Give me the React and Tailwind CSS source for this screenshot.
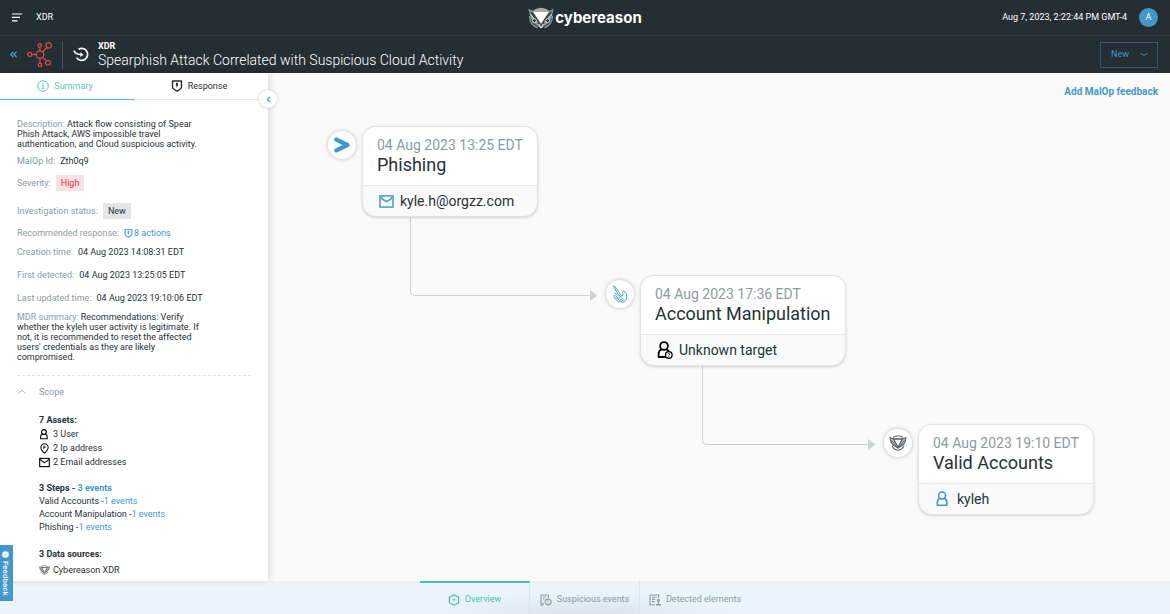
import { ChevronLeft, ChevronsLeft } from 'lucide-react';

const ASSETS = [
  { icon: 'user', label: '3 User' },
  { icon: 'pin', label: '2 Ip address' },
  { icon: 'mail', label: '2 Email addresses' }
];

const STEPS = [
  { name: 'Valid Accounts', events: '1 events' },
  { name: 'Account Manipulation', events: '1 events' },
  { name: 'Phishing', events: '1 events' }
];

const OwlIcon = ({ className }) => (
  <svg className={className} viewBox="0 0 26 22" fill="none" aria-hidden="true">
    <path d="M5 3.6 Q13 -2.2 21 3.6 L19 5 H7 Z" fill="#a4aaad" />
    <path d="M1.6 9 Q1.8 17.8 9.5 20.8 M24.4 9 Q24.2 17.8 16.5 20.8" stroke="#8b9295" strokeWidth="1.5" />
    <path d="M0.3 1.8 L5.5 4 H20.5 L25.7 1.8 L24.2 8 L21.5 15.5 L15.3 20 L13 21.6 L10.7 20 L4.5 15.5 L1.8 8 Z" fill="#8b9295" />
    <path d="M2 4.2 L6 5.4 L13 18 L20 5.4 L24 4.2 L22 8 L13 20.5 L4 8 Z" fill="#3b464b" />
    <path d="M4.8 4.8 H21.2 L13 16.2 Z" fill="#fff" />
    <path d="M2.4 7.6 L9.6 15.4 M23.6 7.6 L16.4 15.4" stroke="#e3e6e7" strokeWidth="1" />
    <circle cx="6.4" cy="13.6" r="1.9" fill="#242e33" stroke="#e3e6e7" strokeWidth="0.9" />
    <circle cx="19.6" cy="13.6" r="1.9" fill="#242e33" stroke="#e3e6e7" strokeWidth="0.9" />
    <path d="M10.8 17 L13 21 L15.2 17" stroke="#fff" strokeWidth="0.9" />
  </svg>
);

const OwlMark = ({ className }) => (
  <svg className={className} viewBox="0 0 18 16" fill="none" stroke="#5d6366" aria-hidden="true">
    <path d="M4 2.4 Q9 -0.8 14 2.4" strokeWidth="1.1" />
    <path d="M1 2.6 L4.5 4 H13.5 L17 2.6 Q16.8 7 14.5 9.5 L9 13.2 L3.5 9.5 Q1.2 7 1 2.6 Z" fill="#b9bdbf" strokeWidth="1.1" />
    <path d="M4.5 4 L9 12.4 L13.5 4 Z" fill="#fff" strokeWidth="1.3" />
    <path d="M2.6 5.6 L7.6 12 M15.4 5.6 L10.4 12" strokeWidth="0.9" />
    <path d="M3 11 Q5 14.8 9 15.2 Q13 14.8 15 11" strokeWidth="1.1" />
  </svg>
);

const ShieldIcon = ({ className }) => (
  <svg className={className} viewBox="0 0 12 12" fill="none" stroke="currentColor" aria-hidden="true">
    <path d="M1.5 1 H10.5 V7 Q10.5 8.8 6 11 Q1.5 8.8 1.5 7 Z" strokeWidth="1.4" strokeLinejoin="round" />
    <path d="M5 2.8 H7.2 L6.8 5 H7.4 L5.4 8 L5.6 5.8 H4.8 Z" fill="currentColor" stroke="none" />
  </svg>
);

const UserIcon = ({ className, unknown = false }) => (
  <svg className={className} viewBox="0 0 16 18" fill="none" stroke="currentColor" strokeWidth="1.8" aria-hidden="true">
    <circle cx="7" cy="5" r="3.9" />
    <path d="M4.6 8.2 Q1.6 9.6 1.6 13 V16 H12.4 V13 Q12.4 9.6 9.4 8.2" strokeLinejoin="round" />
    {unknown && (
      <g>
        <circle cx="11.8" cy="14" r="3.3" fill="#fafafa" strokeWidth="1.3" />
        <path d="M10.8 13.2 Q11 12.3 11.9 12.4 Q12.9 12.6 12.6 13.5 L11.8 14.2 V14.7 M11.8 15.3 V16" strokeWidth="0.8" />
      </g>
    )}
  </svg>
);

const PinIcon = ({ className }) => (
  <svg className={className} viewBox="0 0 12 13" fill="none" stroke="currentColor" aria-hidden="true">
    <path d="M6 12 Q1.7 8 1.7 5.2 A4.3 4.3 0 0 1 10.3 5.2 Q10.3 8 6 12 Z" strokeWidth="1.2" />
    <path d="M5 6.8 V4 H6.4 Q7.4 4.2 6.8 5.4 L5.2 5.6" strokeWidth="0.9" />
  </svg>
);

const MailIcon = ({ className }) => (
  <svg className={className} viewBox="0 0 16 14" fill="none" stroke="currentColor" strokeWidth="1.6" aria-hidden="true">
    <rect x="1" y="1" width="14" height="12" />
    <path d="M2 2 L3.5 4.4 L8 7.2 L12.5 4.4 L14 2" />
  </svg>
);

const MalopIcon = ({ className }) => (
  <svg className={className} viewBox="0 0 25 25" fill="none" stroke="#d04a4c" strokeWidth="1.3" aria-hidden="true">
    <circle cx="13" cy="12.6" r="3.8" />
    <circle cx="2.7" cy="12.4" r="2" />
    <circle cx="12.8" cy="3.4" r="1.7" />
    <circle cx="21.7" cy="3.4" r="2.7" />
    <circle cx="21" cy="20.8" r="2.4" />
    <circle cx="13" cy="23" r="1.7" />
    <path d="M4.7 12.5 H9.2 M12.9 5.1 V8.8 M15.7 10 L19.9 5.5 M15.8 15.3 L19.3 19 M13 16.4 V21.3" />
  </svg>
);

const ReopenIcon = ({ className }) => (
  <svg className={className} viewBox="0 0 16 16" fill="none" stroke="#fff" strokeWidth="1.7" aria-hidden="true">
    <path d="M5.6 2.2 A6 6 0 1 1 3.6 10.6" />
    <path d="M0.8 3.4 Q2.2 7.4 8.8 7.6" strokeWidth="1.5" />
    <path d="M7.4 5.2 L10.6 7.7 L7.2 10 Z" fill="#fff" stroke="none" />
  </svg>
);

const ArrowMark = ({ className }) => (
  <svg className={className} viewBox="0 0 16 16" aria-hidden="true">
    <path d="M2.4 2.6 L13.4 8 L2.4 13.4" fill="none" stroke="#4398cb" strokeWidth="4.4" strokeLinecap="round" strokeLinejoin="round" />
    <path d="M0 6.4 L5.6 8 L0 9.6 Z" fill="#fff" />
  </svg>
);

const HandIcon = ({ className }) => (
  <svg className={className} viewBox="0 0 16 18" fill="none" stroke="#4aa9cc" strokeWidth="1" aria-hidden="true">
    <path d="M1 0.6 L6.4 9.4 M2.4 0.8 L8.2 9" />
    <path d="M8.2 9 L10 11.4 Q11.4 10 10.8 7.4 Q10.8 6 12.2 6.2 Q14.8 8.4 14.9 12 Q14.4 16.8 10 17.2 Q6 17.4 3.4 14 L2 11.4" />
    <path d="M2 11.4 Q2 10.2 3.2 10.6 L6.4 13.4 M2.6 9.4 Q2.8 8 4 8.6 L7.4 11.6 M6.4 9.4 L9 12.2 M3.6 13.4 Q4 12.6 5 13.4 L7.6 15.4 M6.4 13.4 L8.6 12.2 M7.6 15.4 L11 13.4 M9 16.4 L12.4 14.4" />
  </svg>
);

const OverviewIcon = ({ className }) => (
  <svg className={className} viewBox="0 0 12 12" fill="none" stroke="currentColor" aria-hidden="true">
    <path d="M6 0.8 L10.6 3.3 V8.7 L6 11.2 L1.4 8.7 V3.3 Z" strokeWidth="1.3" strokeLinejoin="round" />
    <path d="M4.4 5 H7.6 L6 7.4 Z" fill="currentColor" stroke="none" />
  </svg>
);

const EventsIcon = ({ className }) => (
  <svg className={className} viewBox="0 0 12 12" fill="none" stroke="currentColor" aria-hidden="true">
    <path d="M4 9.8 H2.6 V11 H1 V1 H8.4 V4 M3 3 H6 M3 5 H4.6" strokeWidth="1.1" />
    <circle cx="8.1" cy="8.1" r="3" strokeWidth="1.1" />
    <path d="M8.1 6.3 V8.6 M8.1 9.2 V10" strokeWidth="0.9" />
  </svg>
);

const ElementsIcon = ({ className }) => (
  <svg className={className} viewBox="0 0 12 12" fill="none" stroke="currentColor" aria-hidden="true">
    <path d="M6 10.8 H1 V1 H9.6 V4 M3 3.2 H7.6 M3 5.4 H6 M3 7.6 H6" strokeWidth="1.1" />
    <circle cx="9.4" cy="6.2" r="1.3" fill="currentColor" strokeWidth="0.4" />
    <path d="M9.4 7 V10.4 M7 10.8 H11.8" strokeWidth="1.4" />
  </svg>
);

const ICONS = { user: UserIcon, pin: PinIcon, mail: MailIcon };

const TopBar = () => (
  <header className="flex h-9 items-center justify-between border-b border-[#313b40] bg-[#242e33] px-3 text-white">
    <div className="flex flex-1 items-center gap-3">
      <button type="button" aria-label="Menu">
        <svg className="h-[10px] w-3" viewBox="0 0 12 10" stroke="#fff" strokeWidth="1.2" aria-hidden="true">
          <path d="M0 1 H10 M0 4.4 H8 M0 7.8 H5.5" />
        </svg>
      </button>
      <span className="text-[9px]">XDR</span>
    </div>
    <div className="flex items-center gap-px font-[Inter,sans-serif]">
      <OwlIcon className="h-[22px] w-[26px]" />
      <span className="text-[15px] leading-5 font-bold">cybereason</span>
    </div>
    <div className="flex flex-1 items-center justify-end gap-3">
      <time className="text-[9px]">Aug 7, 2023, 2:22:44 PM GMT-4</time>
      <button type="button" className="size-[19px] rounded-full bg-[#4398cb] text-[9px]">A</button>
    </div>
  </header>
);

const TitleBar = () => (
  <div className="flex h-[37px] items-center bg-[#242e33] pr-3 pl-2 text-white">
    <button type="button" aria-label="Back" className="text-[#4398cb]">
      <ChevronsLeft size={11} strokeWidth={3} />
    </button>
    <MalopIcon className="ml-2 size-[25px]" />
    <div className="mr-[10px] ml-[10px] h-7 w-px bg-[#48535a]" />
    <ReopenIcon className="size-4" />
    <div className="ml-[9px] flex-1">
      <p className="text-[9px] leading-[11px] font-bold">XDR</p>
      <h1 className="text-[14px] leading-4 font-light">Spearphish Attack Correlated with Suspicious Cloud Activity</h1>
    </div>
    <div className="grid items-center">
      <select
        aria-label="Status"
        defaultValue="New"
        className="col-start-1 row-start-1 h-[26px] w-[58px] appearance-none border border-[#2d5b76] bg-transparent pl-[10px] text-[9px] text-[#4398cb]"
      >
        <option>New</option>
      </select>
      <svg className="pointer-events-none col-start-1 row-start-1 mr-[10px] h-[5px] w-2 justify-self-end" viewBox="0 0 8 5" fill="none" stroke="#4398cb" aria-hidden="true">
        <path d="M0.4 1 L4 3.6 L7.6 1" />
      </svg>
    </div>
  </div>
);

const Field = ({ label, children, className = '' }) => (
  <div className={`flex items-center ${className}`}>
    <dt className="text-[#8a9ba5]">{label}</dt>
    <dd className="ml-[5px]">{children}</dd>
  </div>
);

const Sidebar = () => (
  <aside className="relative z-10 w-[268px] shrink-0 bg-white text-[9px] leading-[10px] text-[#263238] shadow-[2px_0_6px_rgba(0,0,0,0.12)]">
    <nav className="grid h-[27px] grid-cols-2">
      <button type="button" className="flex items-center justify-center gap-[5px] border-b border-[#5cc4b8] pr-1 text-[#5cc4b8]">
        <svg className="size-3" viewBox="0 0 12 12" fill="none" stroke="currentColor" aria-hidden="true">
          <circle cx="6" cy="6" r="5.3" />
          <path d="M6 2.8 V4 M5 5.3 H6.1 V8.7 M4.8 8.7 H7.3" />
        </svg>
        Summary
      </button>
      <button type="button" className="flex items-center justify-center gap-[5px] border-b border-[#e8ebec] pr-1">
        <ShieldIcon className="size-3" />
        Response
      </button>
    </nav>
    <button
      type="button"
      aria-label="Collapse"
      className="absolute top-[17px] -right-[9px] flex size-[18px] items-center justify-center rounded-full bg-white text-[#4398cb] shadow-[0_0_3px_rgba(0,0,0,0.25)]"
    >
      <ChevronLeft size={9} strokeWidth={3} />
    </button>

    <div className="px-[17px] pt-[19px] pb-1">
      <dl>
        <div className="w-[184px]">
          <dt className="inline text-[#8a9ba5]">Description: </dt>
          <dd className="inline">
            Attack flow consisting of Spear Phish Attack, AWS impossible travel authentication, and Cloud suspicious activity.
          </dd>
        </div>
        <Field label="MalOp Id:" className="mt-[7px]">Zth0q9</Field>
        <Field label="Severity:" className="mt-[9px]">
          <span className="flex h-4 items-center bg-[#f9e1e4] px-[5px] text-[#d9343f]">High</span>
        </Field>
        <Field label="Investigation status:" className="mt-3">
          <span className="flex h-4 items-center bg-[#e4e5e6] px-[5px]">New</span>
        </Field>
        <Field label="Recommended response:" className="mt-[9px]">
          <a href="#actions" className="flex items-center gap-px text-[#4398cb]">
            <ShieldIcon className="size-[9px]" />
            8 actions
          </a>
        </Field>
        <Field label="Creation time:" className="mt-[9px]">04 Aug 2023 14:08:31 EDT</Field>
        <Field label="First detected:" className="mt-[13px]">04 Aug 2023 13:25:05 EDT</Field>
        <Field label="Last updated time:" className="mt-[13px]">04 Aug 2023 19:10:06 EDT</Field>
        <div className="mt-[9px] w-[184px]">
          <dt className="inline text-[#8a9ba5]">MDR summary: </dt>
          <dd className="inline">
            Recommendations: Verify whether the kyleh user activity is legitimate. If not, it is recommended to reset the affected users' credentials as they are likely compromised.
          </dd>
        </div>
      </dl>

      <section className="mt-[13px] border-t border-dashed border-[#dfe3e5] pt-[11px]">
        <button type="button" className="flex items-center gap-3 text-[#8a9ba5]">
          <svg className="h-[6px] w-[10px]" viewBox="0 0 10 6" fill="none" stroke="#8fc4e0" aria-hidden="true">
            <path d="M1 4.6 L5 1 L9 4.6" />
          </svg>
          Scope
        </button>
        <div className="pt-[16px] pl-[22px] leading-[14px]">
          <h2 className="font-bold">7 Assets:</h2>
          <ul>
            {ASSETS.map(({ icon, label }) => {
              const Icon = ICONS[icon];
              return (
                <li key={label} className="flex items-center gap-[3px]">
                  <Icon className="h-[11px] w-[11px] text-black" />
                  {label}
                </li>
              );
            })}
          </ul>
          <h2 className="mt-[13px] leading-[13px] font-bold">
            3 Steps - <a href="#events" className="text-[#4398cb]">3 events</a>
          </h2>
          <ul className="leading-[13px]">
            {STEPS.map(step => (
              <li key={step.name}>
                {step.name} -<a href="#events" className="text-[#4398cb]">{step.events}</a>
              </li>
            ))}
          </ul>
          <h2 className="mt-[13px] leading-[14px] font-bold">3 Data sources:</h2>
          <p className="mt-[2px] flex items-center gap-[3px]">
            <OwlMark className="h-[10px] w-[11px]" />
            Cybereason XDR
          </p>
        </div>
      </section>
    </div>
  </aside>
);

const StepNode = ({ position, badge, time, title, icon, target }) => (
  <article className={`absolute flex items-start gap-[6px] ${position}`}>
    <div className="mt-[5px] flex size-7 items-center justify-center rounded-full bg-white shadow-[0_0_4px_rgba(0,0,0,0.25)]">
      {badge}
    </div>
    <div className="overflow-hidden rounded-[14px] border border-[#e0e2e3] bg-[#fafafa] whitespace-nowrap shadow-[0_1px_3px_rgba(0,0,0,0.15)]">
      <div className="border-b border-[#e6e8e9] bg-white px-[14px] py-[9px]">
        <time className="block text-[14px] leading-[18px] text-[#8a9ba5]">{time}</time>
        <h2 className="text-[18px] leading-[22px] text-[#263238]">{title}</h2>
      </div>
      <div className="flex h-[30px] items-center gap-[6px] px-4 text-[14px] text-[#263238]">
        {icon}
        {target}
      </div>
    </div>
  </article>
);

const AttackGraph = () => (
  <main className="relative flex-1 bg-[#fafafa]">
    <a href="#feedback" className="absolute top-3 right-3 text-[10px] leading-[14px] font-bold text-[#4398cb]">
      Add MalOp feedback
    </a>
    {/* connectors between the steps */}
    <svg className="absolute top-0 left-0 h-[440px] w-[840px]" fill="none" stroke="#cdd2d5" aria-hidden="true">
      <path d="M142.5 140 V218.5 Q142.5 222.5 146.5 222.5 H322" />
      <path d="M322 217 L329.5 222.5 L322 228 Z" fill="#cdd2d5" stroke="none" />
      <path d="M434.5 290 V367.5 Q434.5 371.5 438.5 371.5 H600" />
      <path d="M600 366 L607.5 371.5 L600 377 Z" fill="#cdd2d5" stroke="none" />
    </svg>
    <StepNode
      position="left-[60px] top-[53px]"
      badge={<ArrowMark className="size-4" />}
      time="04 Aug 2023 13:25 EDT"
      title="Phishing"
      icon={<MailIcon className="h-[13px] w-[15px] text-[#4398cb]" />}
      target="kyle.h@orgzz.com"
    />
    <StepNode
      position="left-[338px] top-[202px]"
      badge={<HandIcon className="h-[18px] w-4" />}
      time="04 Aug 2023 17:36 EDT"
      title="Account Manipulation"
      icon={<UserIcon unknown className="h-[18px] w-4 text-black" />}
      target="Unknown target"
    />
    <StepNode
      position="left-[616px] top-[351px]"
      badge={<OwlMark className="h-4 w-[18px]" />}
      time="04 Aug 2023 19:10 EDT"
      title="Valid Accounts"
      icon={<UserIcon className="h-4 w-4 text-[#4398cb]" />}
      target="kyleh"
    />
  </main>
);

const BottomTabs = () => (
  <nav className="flex h-[33px] justify-center bg-[#eaf5fb] bg-[radial-gradient(ellipse_150px_22px_at_50%_100%,#d9e4ea,transparent)] text-[9px] text-[#8a9ba5]">
    <button type="button" className="flex w-[110px] items-center justify-center gap-[5px] border-t-2 border-r border-t-[#4dbdb0] border-r-[#dbe6eb] pt-[3px] text-[#4dbdb0]">
      <OverviewIcon className="size-3" />
      Overview
    </button>
    <button type="button" className="flex w-[110px] items-center justify-center gap-[5px] border-r border-[#dbe6eb] pt-[5px]">
      <EventsIcon className="size-3" />
      Suspicious events
    </button>
    <button type="button" className="flex w-[110px] items-center justify-center gap-[5px] pt-[5px]">
      <ElementsIcon className="size-3" />
      Detected elements
    </button>
  </nav>
);

const App = () => (
  <div className="flex min-h-screen flex-col font-[Roboto,sans-serif]">
    <TopBar />
    <TitleBar />
    <div className="flex flex-1">
      <Sidebar />
      <AttackGraph />
    </div>
    <BottomTabs />
    <button type="button" className="fixed bottom-[13px] left-0 z-20 flex h-14 w-[13px] flex-col items-center justify-center gap-[3px] bg-[#4398cb] pr-[3px] text-[8px] leading-[10px] font-medium text-white">
      <svg className="size-[7px]" viewBox="0 0 8 8" aria-hidden="true">
        <circle cx="4" cy="4" r="3.8" fill="#fff" />
        <path d="M2.8 4.2 L3.8 5 L5.4 2.8" fill="none" stroke="#4398cb" strokeWidth="0.8" />
      </svg>
      <span className="[writing-mode:vertical-rl]">Feedback</span>
    </button>
  </div>
);

export default App;
